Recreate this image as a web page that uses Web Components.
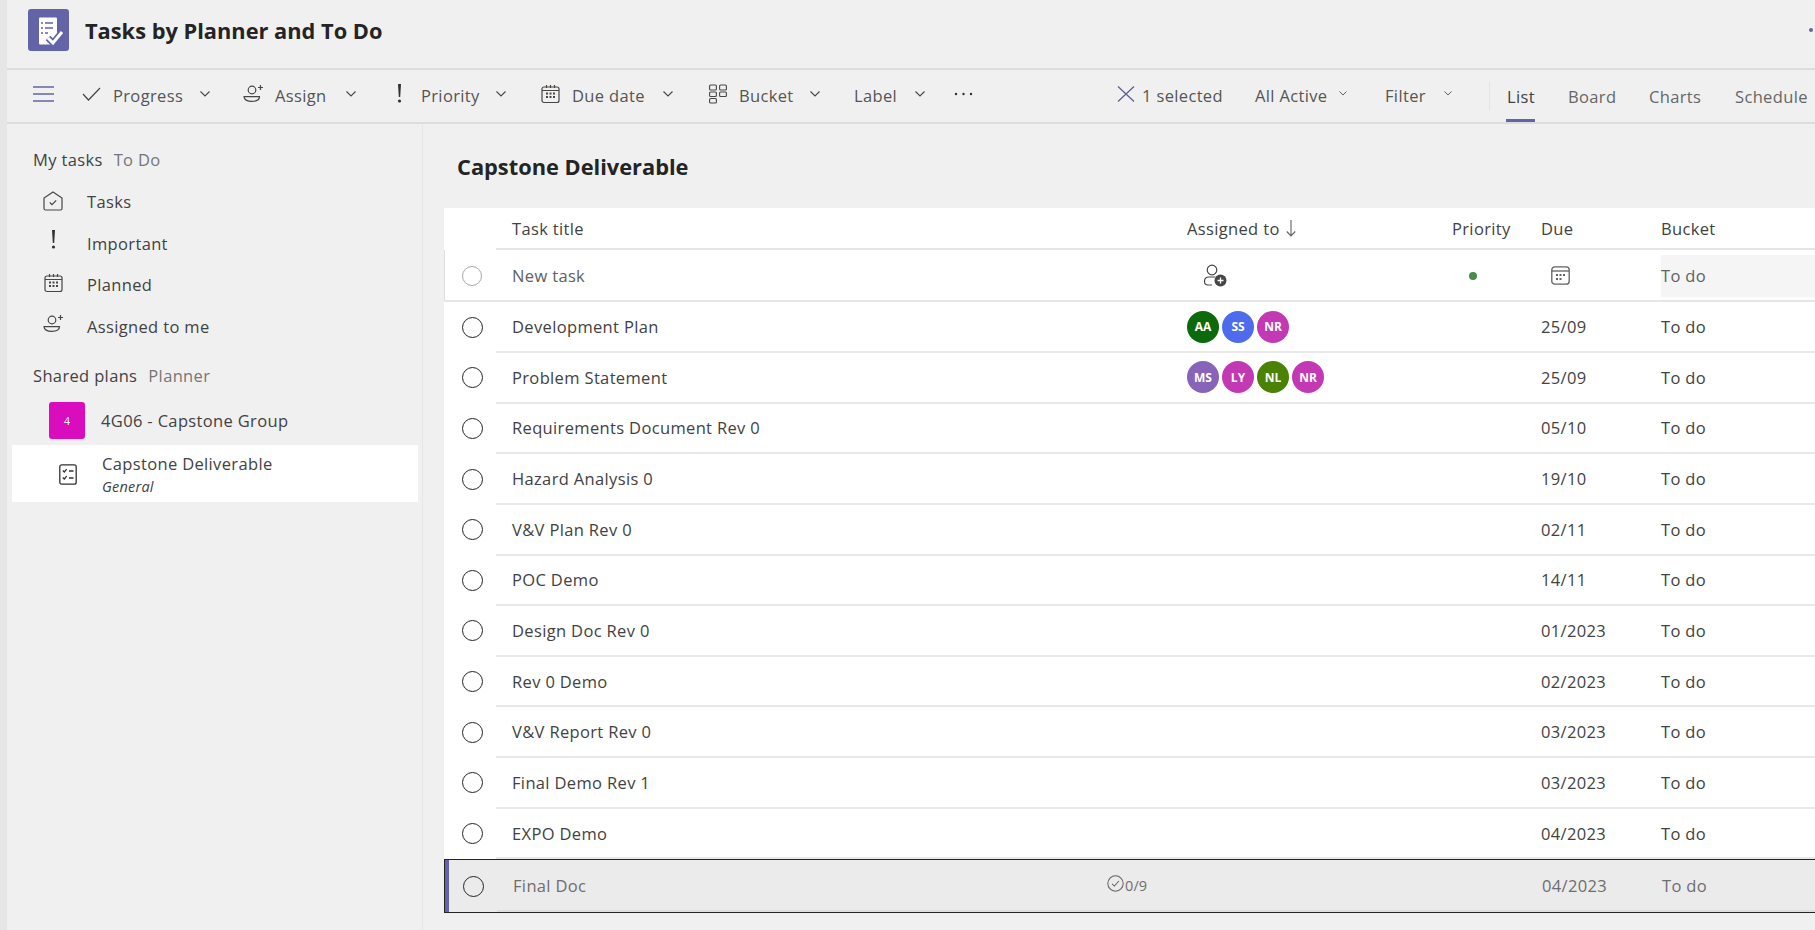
<!DOCTYPE html>
<html>
<head>
<meta charset="utf-8">
<title>Tasks by Planner and To Do</title>
<style>
    html,body{
        margin: 0;
        height: 100%;
        overflow: hidden;
        background: #f0f0f0;
    }
    body{
        font-family: "Open Sans", "Liberation Sans", sans-serif;
        font-size: 16.5px;
        letter-spacing: .35px;
        color: #323130;
    }
</style>
</head>
<body>
<tasks-app></tasks-app>

<script>
const icons = {
    logo: `<svg width="41" height="42" viewBox="0 0 41 42"><rect width="41" height="42" rx="3" fill="#6264a7"/><path d="M11 9.500a1 1 0 0 1 1-1h16a1 1 0 0 1 1 1v23l-4 3H12a1 1 0 0 1-1-1z" fill="#fff"/><path d="M17 14h8M17 19h8M17 24h3" stroke="#6264a7" stroke-width="1.600"/><path d="M13 14h2M13 19h2M13 24h2" stroke="#6264a7" stroke-width="1.600"/><path d="M20 29l5 5 9-11" fill="none" stroke="#6264a7" stroke-width="6.500"/><path d="M20 29l5 5 9-11" fill="none" stroke="#fff" stroke-width="3"/></svg>`,
    menu: `<svg width="21" height="16" viewBox="0 0 21 16"><path d="M0 1h21M0 8h21M0 15h21" stroke="#6264a7" stroke-width="1.600"/></svg>`,
    check: `<svg width="19" height="14" viewBox="0 0 19 14"><path d="M1 7l5.500 6L18 1" fill="none" stroke="#484644" stroke-width="1.200"/></svg>`,
    assign: `<svg width="20" height="20" viewBox="0 0 20 20" fill="none" stroke="#484644" stroke-width="1.200"><circle cx="9" cy="6" r="3.800"/><path d="M1 12.600h15.500c0 3-3 4.800-7.700 4.800S1 15.600 1 12.600z"/><path d="M15 3.500h5M17.500 1v5"/></svg>`,
    bang: `<svg width="19" height="20" viewBox="0 0 19 20"><path d="M8 0h3L10.200 13H8.800z" fill="#323130"/><circle cx="9.500" cy="17" r="1.600" fill="#323130"/></svg>`,
    calendar: `<svg width="19" height="20" viewBox="0 0 19 20" fill="none" stroke="#484644" stroke-width="1.200"><rect x="1" y="3" width="17" height="15.500" rx="2"/><path d="M1 6.500h17M5.500 1v3M9.500 1v3M13.500 1v3"/><path d="M5 9.500h2M8.500 9.500h2M12 9.500h2M5 13h2M8.500 13h2M12 13h2" stroke-width="2"/></svg>`,
    bucket: `<svg width="18" height="20" viewBox="0 0 18 20" fill="none" stroke="#484644" stroke-width="1.100"><rect x=".6" y="1" width="6.800" height="5" rx="1"/><rect x=".6" y="8" width="6.800" height="4.500" rx="1"/><rect x=".6" y="14.500" width="6.800" height="4.500" rx="1"/><rect x="10.600" y="1" width="6.800" height="5" rx="1"/><rect x="10.600" y="8" width="6.800" height="4.500" rx="1"/></svg>`,
    dots: `<svg width="19" height="4" viewBox="0 0 19 4"><circle cx="2" cy="2" r="1.200" fill="#323130"/><circle cx="9.500" cy="2" r="1.200" fill="#323130"/><circle cx="17" cy="2" r="1.200" fill="#323130"/></svg>`,
    close: `<svg width="18" height="16" viewBox="0 0 18 16"><path d="M1 .5l16 15M17 .5l-16 15" stroke="#5b5c8f" stroke-width="1.200"/></svg>`,
    chevron: `<svg width="10" height="6" viewBox="0 0 10 6"><path d="M.5 .5L5 5l4.500-4.500" fill="none" stroke="#484644" stroke-width="1.100"/></svg>`,
    chevronSmall: `<svg width="8" height="5" viewBox="0 0 8 5"><path d="M.5 .5L4 4l3.500-3.500" fill="none" stroke="#616161"/></svg>`,
    home: `<svg width="20" height="20" viewBox="0 0 20 20" fill="none" stroke="#484644" stroke-width="1.200"><path d="M10 1l9 6v10.500a1.500 1.500 0 0 1-1.500 1.500h-15A1.500 1.500 0 0 1 1 17.500V7z"/><path d="M6.800 11.500l2.200 2.200 4.200-4.400"/></svg>`,
    list: `<svg width="18" height="21" viewBox="0 0 18 21" fill="none" stroke="#323130" stroke-width="1.300"><rect x=".8" y=".8" width="16.400" height="19.400" rx="2"/><path d="M3.800 6.500l1.500 1.500 2.400-2.800M3.800 13.500l1.500 1.500 2.400-2.800M10 7h4.500M10 14h4.500"/></svg>`,
    personAdd: `<svg width="24" height="23" viewBox="0 0 24 23" fill="none" stroke="#484644" stroke-width="1.200"><circle cx="9" cy="6" r="4.800"/><path d="M9 21H5a3.500 3.500 0 0 1-3.500-3.500c0-3 2-4.500 4.500-4.500h6"/><circle cx="17.500" cy="16.500" r="6" fill="#484644" stroke="none"/><path d="M14.500 16.500h6M17.500 13.500v6" stroke="#fff" stroke-width="1.300"/></svg>`,
    dueBlank: `<svg width="19" height="19" viewBox="0 0 19 19" fill="none" stroke="#616161" stroke-width="1.300"><rect x=".8" y=".8" width="17.400" height="17.400" rx="3"/><path d="M1 5h17"/><path d="M5 9h2M8.500 9h2M12 9h2M5 13h2M8.500 13h2" stroke-width="1.800"/></svg>`,
    sort: `<svg width="10" height="17" viewBox="0 0 10 17"><path d="M5 0v16M.8 11.500L5 16l4.200-4.500" fill="none" stroke="#616161" stroke-width="1.100"/></svg>`,
    circleCheck: `<svg width="17" height="17" viewBox="0 0 15 15" fill="none" stroke="#616161" stroke-width=".9" style="margin:-3px 1px 0 0"><circle cx="7.500" cy="7.500" r="6.800"/><path d="M4.500 7.800l2 2 4-4.500"/></svg>`
}

class TasksHeader extends HTMLElement{
    connectedCallback(){
        this.attachShadow({mode:'open'}).innerHTML = `
        <style>
            :host{
                display: flex;
                align-items: center;
                height: 68px;
                padding: 0 2px 0 21px;
                border-bottom: 2px solid #dcdcdc;
            }
            svg{display: block;margin-top: -8px;}
            h1{
                margin: -8px 0 0 16px;
                font-size: 21.800px;
                font-weight: 700;
                letter-spacing: 0;
                color: #242424;
                white-space: nowrap;
            }
            .dot{
                width: 4px;
                height: 4px;
                border-radius: 50%;
                background: #6264a7;
                margin: -9px 0 0 auto;
            }
        </style>
        ${icons.logo}
        <h1>Tasks by Planner and To Do</h1>
        <span class="dot"></span>
        `
    }
}

class ToolButton extends HTMLElement{
    connectedCallback(){
        const icon = this.getAttribute('icon');
        const chevron = this.getAttribute('chevron');
        this.attachShadow({mode:'open'}).innerHTML = `
        <style>
            :host{
                display: flex;
                align-items: center;
                white-space: nowrap;
                color: #555;
            }
            .icon{display: flex;margin-right: var(--icon-gap, 12px);margin-top: -4px;}
            .label{width: var(--w);margin-top: -1px;}
            .chev{display: flex;margin-left: var(--chev-gap, 19px);margin-top: -5px;}
        </style>
        ${icon ? `<span class="icon">${icons[icon]}</span>` : ''}
        <span class="label"><slot></slot></span>
        ${chevron !== null ? `<span class="chev">${chevron === 'small' ? icons.chevronSmall : icons.chevron}</span>` : ''}
        `
    }
}

class ViewTab extends HTMLElement{
    connectedCallback(){
        const active = this.hasAttribute('active');
        this.attachShadow({mode:'open'}).innerHTML = `
        <style>
            :host{
                display: flex;
                align-items: center;
                height: 52px;
                box-sizing: border-box;
                padding-top: 3px;
                color: ${active ? '#424242' : '#666'};
                border-bottom: 3px solid ${active ? '#6264a7' : 'transparent'};
                white-space: nowrap;
            }
        </style>
        <slot></slot>
        `
    }
}

class TasksToolbar extends HTMLElement{
    connectedCallback(){
        this.attachShadow({mode:'open'}).innerHTML = `
        <style>
            :host{
                display: flex;
                align-items: center;
                height: 52px;
                padding-left: 26px;
                border-bottom: 2px solid #dcdcdc;
            }
            .menu{display: flex;margin: -4px 28px 0 0;}
            tool-button{margin-right: 33px;}
            .divider{width: 1px;height: 28px;background: #e3e3e3;margin: 0 16px 0 37px;}
        </style>
        <span class="menu">${icons.menu}</span>
        <tool-button icon="check" chevron style="--w:68px">Progress</tool-button>
        <tool-button icon="assign" chevron style="--w:52px">Assign</tool-button>
        <tool-button icon="bang" chevron style="--w:56px;margin-left:1px;margin-right:35px">Priority</tool-button>
        <tool-button icon="calendar" chevron style="--w:72px;margin-right:36px">Due date</tool-button>
        <tool-button icon="bucket" chevron style="--w:52px;margin-right:34px">Bucket</tool-button>
        <tool-button chevron style="--w:41px;--chev-gap:20px;margin-right:29px">Label</tool-button>
        <span style="display:flex;margin:-4px 144px 0 0">${icons.dots}</span>
        <tool-button icon="close" style="--icon-gap:7px;--w:79px;margin-right:34px">1 selected</tool-button>
        <tool-button chevron="small" style="--w:73px;--chev-gap:11px;margin-right:38px">All Active</tool-button>
        <tool-button chevron="small" style="--w:39px;--chev-gap:20px;margin-right:0">Filter</tool-button>
        <span class="divider"></span>
        <view-tab active style="width:29px;padding-left:1px;margin-right:33px">List</view-tab>
        <view-tab style="width:45px;margin-right:36px">Board</view-tab>
        <view-tab style="width:51px;margin-right:35px">Charts</view-tab>
        <view-tab style="width:73px">Schedule</view-tab>
        `
    }
}

class NavHeading extends HTMLElement{
    connectedCallback(){
        this.attachShadow({mode:'open'}).innerHTML = `
        <style>
            :host{
                display: flex;
                gap: 11px;
                height: 40px;
                align-items: center;
                padding-left: 26px;
                color: #424242;
                white-space: nowrap;
            }
            span{color: #767676;}
        </style>
        <slot></slot>
        <span>${this.getAttribute('sub')}</span>
        `
    }
}

class NavItem extends HTMLElement{
    connectedCallback(){
        const icon = this.getAttribute('icon');
        this.attachShadow({mode:'open'}).innerHTML = `
        <style>
            :host{
                display: flex;
                align-items: center;
                height: 41.500px;
                padding-left: 36px;
                color: #424242;
            }
            .icon{
                display: flex;
                width: 20px;
                justify-content: center;
                margin-right: 24px;
                margin-top: var(--lift, -2px);
            }
        </style>
        <span class="icon">${icons[icon]}</span>
        <slot></slot>
        `
    }
}

class SideNav extends HTMLElement{
    connectedCallback(){
        this.attachShadow({mode:'open'}).innerHTML = `
        <style>
            :host{
                display: block;
                width: 416px;
                flex: none;
                box-sizing: border-box;
                padding: 15px 0 0 0;
                border-right: 1px solid #e6e6e6;
            }
            .items{margin-top: 2px;}
            .heading2{margin-top: 8px;}
            .group{
                display: flex;
                align-items: center;
                height: 37px;
                margin: 7px 0 0 42px;
                color: #424242;
            }
            .tile{
                width: 36px;
                height: 37px;
                border-radius: 3px;
                background: #d90dbd;
                color: #fff;
                font-size: 10.500px;
                letter-spacing: 0;
                display: flex;
                align-items: center;
                justify-content: center;
                margin-right: 16px;
            }
            .plan{
                display: flex;
                align-items: center;
                height: 57px;
                width: 406px;
                margin: 6px 0 0 5px;
                background: #fff;
                color: #424242;
            }
            .plan .ic{display: flex;margin: 2px 25px 0 47px;}
            .plan small{
                display: block;
                font-style: italic;
                font-size: 14.500px;
                line-height: 17px;
                margin-top: 2.500px;
                letter-spacing: .2px;
            }
            .plan div div{line-height: 24px;}
        </style>
        <nav-heading sub="To Do">My tasks</nav-heading>
        <div class="items">
            <nav-item icon="home">Tasks</nav-item>
            <nav-item icon="bang" style="--lift:-6px">Important</nav-item>
            <nav-item icon="calendar" style="--lift:-4px">Planned</nav-item>
            <nav-item icon="assign" style="--lift:-4px">Assigned to me</nav-item>
        </div>
        <nav-heading class="heading2" sub="Planner">Shared plans</nav-heading>
        <div class="group"><span class="tile">4</span>4G06 - Capstone Group</div>
        <div class="plan">
            <span class="ic">${icons.list}</span>
            <div><div>Capstone Deliverable</div><small>General</small></div>
        </div>
        `
    }
}

class UserAvatar extends HTMLElement{
    connectedCallback(){
        this.attachShadow({mode:'open'}).innerHTML = `
        <style>
            :host{
                display: flex;
                align-items: center;
                justify-content: center;
                width: 32px;
                height: 32px;
                border-radius: 50%;
                background: ${this.getAttribute('color')};
                color: #fff;
                font-size: 12px;
                font-weight: 700;
                letter-spacing: 0;
            }
        </style>
        ${this.getAttribute('initials')}
        `
    }
}

// columns are shared by the head, the new task line and the rows
const columns = `
    .cols{
        flex: 1;
        display: grid;
        grid-template-columns: 691px 265px 89px 120px 1fr;
        align-items: center;
        min-width: 0;
    }
    .cols > :first-child{padding-left: 16px;}
`

class TaskHead extends HTMLElement{
    connectedCallback(){
        this.attachShadow({mode:'open'}).innerHTML = `
        <style>
            :host{
                display: flex;
                height: 42px;
                padding-left: 52px;
                background: #fff;
                color: #424242;
            }
            ${columns}
            .cols{border-bottom: 2px solid #e6e6e6;}
            .assigned{display: flex;align-items: center;gap: 6px;}
        </style>
        <div class="cols">
            <span>Task title</span>
            <span class="assigned">Assigned to ${icons.sort}</span>
            <span>Priority</span>
            <span>Due</span>
            <span>Bucket</span>
        </div>
        `
    }
}

class NewTaskRow extends HTMLElement{
    connectedCallback(){
        this.attachShadow({mode:'open'}).innerHTML = `
        <style>
            :host{
                display: flex;
                height: 52.300px;
                box-sizing: border-box;
                padding-top: 1px;
                background: #fff;
                border-left: 1px solid #e0e0e0;
                border-bottom: 2px solid #e6e6e6;
                border-radius: 0 0 0 2px;
                color: #616161;
            }
            ${columns}
            .radio{
                width: 51px;
                display: flex;
                align-items: center;
                justify-content: center;
                flex: none;
            }
            .radio i{
                width: 20px;
                height: 20px;
                box-sizing: border-box;
                border: 1.300px solid #a8a8a8;
                border-radius: 50%;
                margin-left: 2px;
            }
            .ic{display: flex;}
            .bucket{
                height: 42px;
                display: flex;
                align-items: center;
                background: #f5f5f5;
                color: #616161;
            }
        </style>
        <span class="radio"><i></i></span>
        <div class="cols">
            <span>New task</span>
            <span class="ic" style="padding-left:16px">${icons.personAdd}</span>
            <span class="ic" style="padding-left:17px"><svg width="8" height="8"><circle cx="4" cy="4" r="4" fill="#498a4d"/></svg></span>
            <span class="ic" style="padding-left:10px">${icons.dueBlank}</span>
            <span class="bucket">To do</span>
        </div>
        `
    }
}

class TaskRow extends HTMLElement{
    connectedCallback(){
        const selected = this.hasAttribute('selected');
        const progress = this.getAttribute('progress');
        this.attachShadow({mode:'open'}).innerHTML = `
        <style>
            :host{
                display: flex;
                height: ${selected ? '53.500px' : '50.650px'};
                box-sizing: border-box;
                background: ${selected ? '#ebebeb' : '#fff'};
                color: ${selected ? '#6e6e6e' : '#424242'};
                ${selected ? 'border: solid #252423;border-width: 1px 0 1px 1px;' : ''}
            }
            ${columns}
            .bar{width: 4px;background: #6264a7;flex: none;}
            .radio{
                width: ${selected ? '48px' : '52px'};
                display: flex;
                align-items: center;
                justify-content: center;
                flex: none;
            }
            .radio i{
                width: 21px;
                height: 21px;
                box-sizing: border-box;
                border: 1.400px solid #242424;
                border-radius: 50%;
                ${selected ? '' : 'margin: -1px 0 0 4px;'}
            }
            .cols{border-bottom: 2px solid ${selected ? '#dedede' : '#e8e8e8'};}
            .cols span{white-space: nowrap;}
            .title{display: flex;align-items: center;padding-right: 41px;}
            .progress{
                display: flex;
                align-items: center;
                margin-left: auto;
                font-size: 14.500px;
                letter-spacing: 0;
            }
            .people{display: flex;gap: 3px;}
        </style>
        ${selected ? '<span class="bar"></span>' : ''}
        <span class="radio"><i></i></span>
        <div class="cols">
            <span class="title">${this.getAttribute('name')}${progress ? `<span class="progress">${icons.circleCheck}${progress}</span>` : ''}</span>
            <span class="people"><slot></slot></span>
            <span></span>
            <span>${this.getAttribute('due')}</span>
            <span>To do</span>
        </div>
        `
    }
}

class TaskList extends HTMLElement{
    connectedCallback(){
        this.attachShadow({mode:'open'}).innerHTML = `
        <style>
            :host{
                display: block;
                flex: 1;
                min-width: 0;
                padding-left: 21px;
            }
            h2{
                margin: 0;
                height: 84px;
                line-height: 86px;
                padding-left: 13px;
                font-size: 21.800px;
                font-weight: 700;
                letter-spacing: 0;
                color: #242424;
            }
        </style>
        <h2>Capstone Deliverable</h2>
        <slot></slot>
        `
    }
}

class TasksApp extends HTMLElement{
    connectedCallback(){
        this.attachShadow({mode:'open'}).innerHTML = `
        <style>
            :host{
                display: flex;
                flex-direction: column;
                height: 930px;
                border-left: 7px solid #e6e6e6;
                box-sizing: border-box;
            }
            .body{display: flex;flex: 1;}
        </style>
        <tasks-header></tasks-header>
        <tasks-toolbar></tasks-toolbar>
        <div class="body">
            <side-nav></side-nav>
            <task-list>
                <task-head></task-head>
                <new-task-row></new-task-row>
                <task-row name="Development Plan" due="25/09">
                    <user-avatar initials="AA" color="#0b6a0b"></user-avatar>
                    <user-avatar initials="SS" color="#4f6bed"></user-avatar>
                    <user-avatar initials="NR" color="#c239b3"></user-avatar>
                </task-row>
                <task-row name="Problem Statement" due="25/09">
                    <user-avatar initials="MS" color="#8764b8"></user-avatar>
                    <user-avatar initials="LY" color="#c239b3"></user-avatar>
                    <user-avatar initials="NL" color="#498205"></user-avatar>
                    <user-avatar initials="NR" color="#c239b3"></user-avatar>
                </task-row>
                <task-row name="Requirements Document Rev 0" due="05/10"></task-row>
                <task-row name="Hazard Analysis 0" due="19/10"></task-row>
                <task-row name="V&amp;V Plan Rev 0" due="02/11"></task-row>
                <task-row name="POC Demo" due="14/11"></task-row>
                <task-row name="Design Doc Rev 0" due="01/2023"></task-row>
                <task-row name="Rev 0 Demo" due="02/2023"></task-row>
                <task-row name="V&amp;V Report Rev 0" due="03/2023"></task-row>
                <task-row name="Final Demo Rev 1" due="03/2023"></task-row>
                <task-row name="EXPO Demo" due="04/2023"></task-row>
                <task-row name="Final Doc" due="04/2023" progress="0/9" selected></task-row>
            </task-list>
        </div>
        `
    }
}

customElements.define('tool-button',ToolButton)
customElements.define('view-tab',ViewTab)
customElements.define('tasks-header',TasksHeader)
customElements.define('tasks-toolbar',TasksToolbar)
customElements.define('nav-heading',NavHeading)
customElements.define('nav-item',NavItem)
customElements.define('side-nav',SideNav)
customElements.define('user-avatar',UserAvatar)
customElements.define('task-head',TaskHead)
customElements.define('new-task-row',NewTaskRow)
customElements.define('task-row',TaskRow)
customElements.define('task-list',TaskList)
customElements.define('tasks-app',TasksApp)
</script>
</body>
</html>
